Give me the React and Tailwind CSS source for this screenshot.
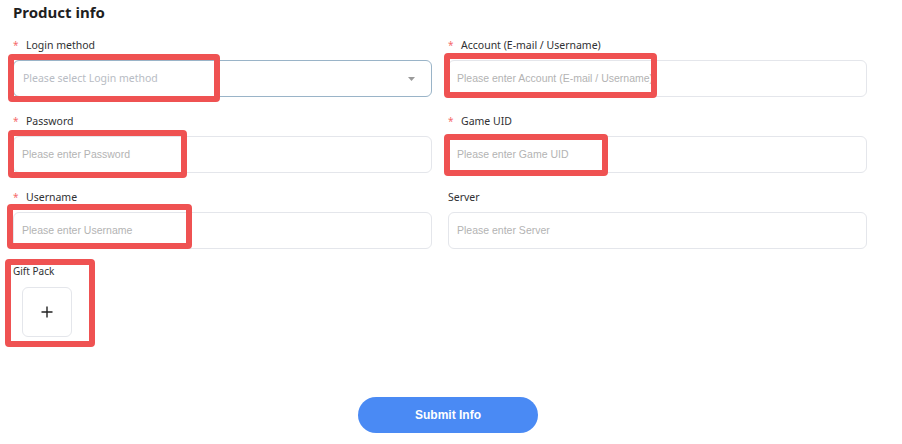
import React from 'react';

const fieldsTop = [
  { label: 'Login method', required: true, placeholder: 'Please select Login method', select: true },
  { label: 'Account (E-mail / Username)', required: true, placeholder: 'Please enter Account (E-mail / Username)' },
  { label: 'Password', required: true, placeholder: 'Please enter Password' },
  { label: 'Game UID', required: true, placeholder: 'Please enter Game UID' },
  { label: 'Username', required: true, placeholder: 'Please enter Username' },
  { label: 'Server', required: false, placeholder: 'Please enter Server' },
];

// annotation boxes drawn over the form
const marks = [
  { key: 'login', cls: 'left-[8px] top-[54px] w-[212px] h-[48px]' },
  { key: 'account', cls: 'left-[444px] top-[53px] w-[213px] h-[45px]' },
  { key: 'password', cls: 'left-[8px] top-[130px] w-[179px] h-[48px]' },
  { key: 'username', cls: 'left-[7px] top-[204px] w-[185px] h-[45px]' },
  { key: 'uid', cls: 'left-[444px] top-[134px] w-[164px] h-[42px]' },
  { key: 'gift', cls: 'left-[5px] top-[259px] w-[90px] h-[88px]' },
];

const Field = ({ label, required, placeholder, select }) => (
  <div>
    <div className="h-4 leading-4 text-[10.5px] text-[#303133] flex items-center">
      {required && <span className="inline-block w-[13px] text-[#f56c6c] text-[10px]">*</span>}
      <span>{label}</span>
    </div>
    <div
      className={`mt-[7px] h-[37px] rounded-[6px] border flex items-center justify-between overflow-hidden ${
        select ? 'border-[#9ab4c8] pl-[9px] pr-[16px]' : 'border-[#e4e6eb] pl-[8px]'
      }`}
    >
      <span
        className={`whitespace-nowrap text-[10.5px] ${
          select ? "font-['Noto_Sans',sans-serif] text-[#b8bcc4]" : "font-['Liberation_Sans',Arial,sans-serif] text-[#b3b3b3]"
        }`}
      >
        {placeholder}
      </span>
      {select && (
        <svg width="7" height="4" viewBox="0 0 7 4">
          <path d="M0 0 L7 0 L3.5 4 Z" fill="#9a9a9a" />
        </svg>
      )}
    </div>
  </div>
);

export default function App() {
  return (
    <div className="relative w-[902px] h-[444px] bg-white overflow-hidden font-['Noto_Sans',sans-serif]">
      <div className="pl-[13px] pt-[2px] w-[867px]">
        <h2 className="text-[15px] font-bold leading-5 text-[#1f1f1f]">Product info</h2>
        <div className="mt-[15px] grid grid-cols-2 gap-x-4 gap-y-4">
          {fieldsTop.map((f) => (
            <Field key={f.label} {...f} />
          ))}
        </div>
        <div className="mt-[14px]">
          <div className="h-4 leading-4 text-[10px] text-[#303133]">Gift Pack</div>
          <div className="ml-[9px] mt-[8px] w-[50px] h-[50px] rounded-[6px] border border-[#e4e6eb] flex items-center justify-center">
            <svg width="12" height="12" viewBox="0 0 12 12">
              <path d="M6 0.5 V11.5 M0.5 6 H11.5" stroke="#222" strokeWidth="1.4" />
            </svg>
          </div>
        </div>
      </div>
      <div className="mt-[60px] pl-[358px]">
        <button className="w-[180px] h-[36px] rounded-full bg-[#4a8af4] text-white text-[12px] font-bold font-['Liberation_Sans',Arial,sans-serif]">
          Submit Info
        </button>
      </div>

      {marks.map((m) => (
        <div key={m.key} className={`absolute ${m.cls} border-[6px] border-[#ef5252] rounded-[4px] pointer-events-none`} />
      ))}
    </div>
  );
}
